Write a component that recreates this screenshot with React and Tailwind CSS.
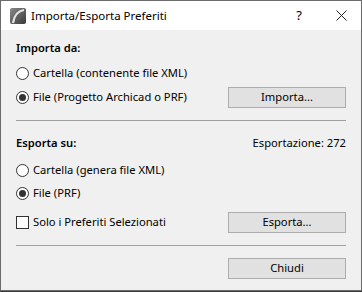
import React from "react";

const FONT = { fontFamily: '"Noto Sans", "Segoe UI", sans-serif' };

function Radio({ checked, label }) {
  return (
    <div className="flex items-center gap-[4px] h-[16px]">
      <span className="w-[13px] h-[13px] rounded-full border border-[#333] bg-white flex items-center justify-center">
        {checked ? <span className="w-[7px] h-[7px] rounded-full bg-[#333]" /> : null}
      </span>
      <span>{label}</span>
    </div>
  );
}

function Button({ children }) {
  return (
    <div className="w-[118px] h-[21px] border border-[#adadad] bg-[#e1e1e1] flex items-center justify-center">
      {children}
    </div>
  );
}

function Logo() {
  return (
    <svg width="16" height="16" viewBox="0 0 16 16">
      <defs>
        <linearGradient id="lg" x1="0" y1="0" x2="1" y2="1">
          <stop offset="0" stopColor="#8a8a8a" />
          <stop offset="1" stopColor="#3a3a3a" />
        </linearGradient>
      </defs>
      <rect x="0" y="0" width="16" height="16" rx="2" fill="url(#lg)" />
      <path d="M3 15 C4 8 8 3 14 2" stroke="#e6e6e6" strokeWidth="2.2" fill="none" />
    </svg>
  );
}

export default function App() {
  return (
    <div className="w-[362px] h-[292px] bg-[#3c3c3c] text-[11.2px] text-black" style={FONT}>
      <div className="w-[362px] h-[291px] border border-[#6b6b6b] bg-[#f0f0f0] flex flex-col">
        <div className="h-[29px] bg-white flex items-center pl-[9px] pr-[14px]">
          <Logo />
          <span className="ml-[5px] flex-1 text-[11.5px]">Importa/Esporta Preferiti</span>
          <span className="mr-[34px] text-[13px]">?</span>
          <svg width="11" height="11" viewBox="0 0 11 11">
            <path d="M0.5 0.5 L10.5 10.5 M10.5 0.5 L0.5 10.5" stroke="#222" strokeWidth="1" />
          </svg>
        </div>
        <div className="flex-1 px-[15px] flex flex-col">
          <div className="mt-[10px] h-[16px] flex items-center font-semibold">Importa da:</div>
          <div className="mt-[9px]"><Radio label="Cartella (contenente file XML)" /></div>
          <div className="mt-[6px] flex items-center justify-between h-[21px]">
            <Radio checked label="File (Progetto Archicad o PRF)" />
            <Button>Importa...</Button>
          </div>
          <div className="mt-[12px] h-px bg-[#a0a0a0]" />
          <div className="mt-[14px] h-[16px] flex items-center justify-between">
            <span className="font-semibold">Esporta su:</span>
            <span>Esportazione: 272</span>
          </div>
          <div className="mt-[11px]"><Radio label="Cartella (genera file XML)" /></div>
          <div className="mt-[7px]"><Radio checked label="File (PRF)" /></div>
          <div className="mt-[11px] flex items-center justify-between h-[21px]">
            <div className="flex items-center gap-[4px]">
              <span className="w-[13px] h-[13px] border border-[#333] bg-white" />
              <span>Solo i Preferiti Selezionati</span>
            </div>
            <Button>Esporta...</Button>
          </div>
          <div className="mt-[12px] h-px bg-[#a0a0a0]" />
          <div className="mt-[12px] flex justify-end">
            <Button>Chiudi</Button>
          </div>
        </div>
      </div>
    </div>
  );
}
